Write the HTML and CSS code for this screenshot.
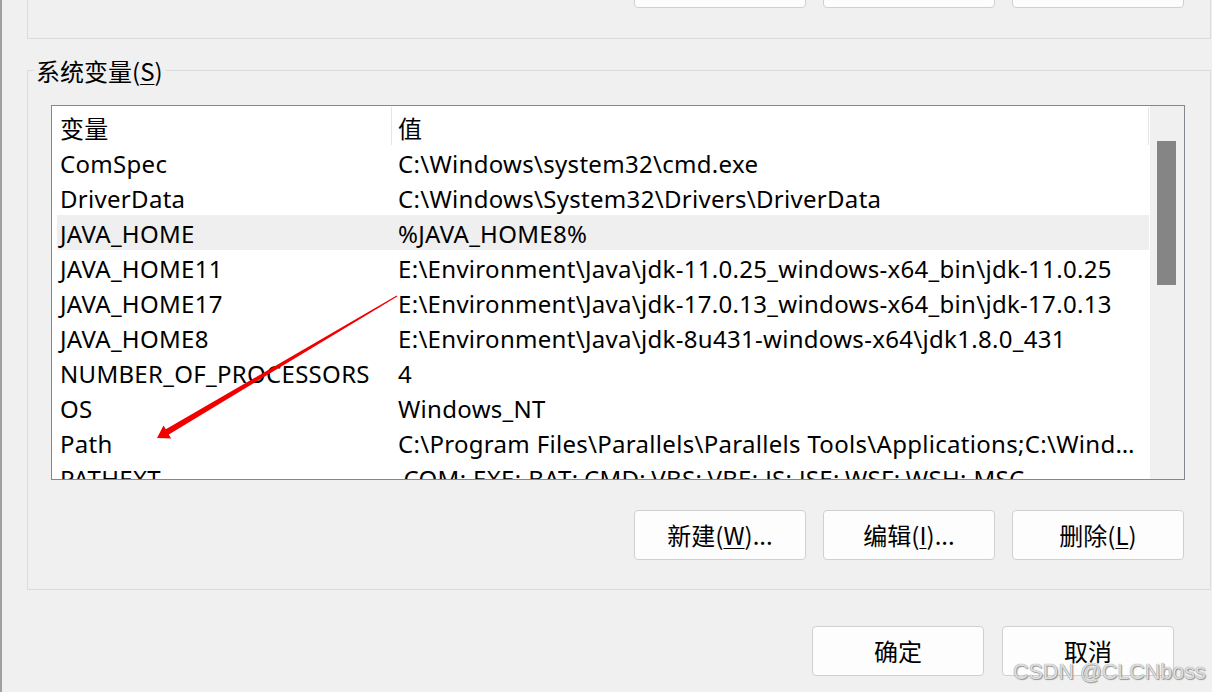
FILE: index.html
```html
<!DOCTYPE html>
<html lang="zh-CN">
<head>
<meta charset="utf-8">
<title>系统变量</title>
<link rel="stylesheet" href="styles.css">
</head>
<body>
<div class="window">
  <div class="top-group">
    <div class="btn-row top-btns">
      <button class="btn"></button>
      <button class="btn"></button>
      <button class="btn"></button>
    </div>
  </div>

  <div class="group">
    <div class="group-title">系统变量(<u>S</u>)</div>
    <div class="group-body">
      <div class="listbox">
        <div class="list-content">
          <div class="row header"><span class="c1">变量</span><span class="c2">值</span></div>
          <div class="row"><span class="c1">ComSpec</span><span class="c2">C:\Windows\system32\cmd.exe</span></div>
          <div class="row"><span class="c1">DriverData</span><span class="c2">C:\Windows\System32\Drivers\DriverData</span></div>
          <div class="row selected"><span class="c1">JAVA_HOME</span><span class="c2">%JAVA_HOME8%</span></div>
          <div class="row"><span class="c1">JAVA_HOME11</span><span class="c2">E:\Environment\Java\jdk-11.0.25_windows-x64_bin\jdk-11.0.25</span></div>
          <div class="row"><span class="c1">JAVA_HOME17</span><span class="c2">E:\Environment\Java\jdk-17.0.13_windows-x64_bin\jdk-17.0.13</span></div>
          <div class="row"><span class="c1">JAVA_HOME8</span><span class="c2">E:\Environment\Java\jdk-8u431-windows-x64\jdk1.8.0_431</span></div>
          <div class="row"><span class="c1">NUMBER_OF_PROCESSORS</span><span class="c2">4</span></div>
          <div class="row"><span class="c1">OS</span><span class="c2">Windows_NT</span></div>
          <div class="row"><span class="c1">Path</span><span class="c2">C:\Program Files\Parallels\Parallels Tools\Applications;C:\Windows\system32;C:\Windows;C:\Windows\System32\Wbem</span></div>
          <div class="row"><span class="c1">PATHEXT</span><span class="c2">.COM;.EXE;.BAT;.CMD;.VBS;.VBE;.JS;.JSE;.WSF;.WSH;.MSC</span></div>
        </div>
        <div class="scrollbar"><div class="thumb"></div></div>
      </div>
      <div class="btn-row group-btns">
        <button class="btn">新建(<u>W</u>)...</button>
        <button class="btn">编辑(<u>I</u>)...</button>
        <button class="btn">删除(<u>L</u>)</button>
      </div>
    </div>
  </div>

  <div class="btn-row dialog-btns">
    <button class="btn">确定</button>
    <button class="btn">取消</button>
  </div>
</div>

<svg class="arrow" width="1212" height="692" viewBox="0 0 1212 692" aria-hidden="true">
  <polygon fill="#f20000" points="396.7,295.6 165.8,429.3 163.5,425.4 157,438 171.1,438.4 168.8,434.5 397.3,296.4"/>
</svg>
<div class="watermark">CSDN @CLCNboss</div>
</body>
</html>
```

FILE: styles.css
```css
html, body {
  margin: 0;
  padding: 0;
  background: #f0f0f0;
}

body {
  position: relative;
  width: 1212px;
  height: 692px;
  overflow: hidden;
  font-family: "Noto Sans", "Noto Sans CJK SC", sans-serif;
  font-size: 24px;
  color: #000;
}

.window {
  box-sizing: border-box;
  width: 1212px;
  height: 692px;
  border-left: 2px solid #a0a0a0;
  padding-left: 25px;
}

u {
  text-decoration: underline;
  text-underline-offset: 3px;
  text-decoration-thickness: 1px;
}

/* ---------- top (partially visible) group ---------- */
.top-group {
  box-sizing: border-box;
  width: 1184px;
  height: 39px;
  border: 1px solid #dcdcdc;
  border-top: none;
  padding-right: 26px;
}

.top-btns .btn {
  margin-top: -42px;
}

/* ---------- buttons ---------- */
.btn-row {
  display: flex;
  justify-content: flex-end;
  gap: 17px;
}

.btn {
  box-sizing: border-box;
  width: 172px;
  height: 50px;
  padding: 0;
  background: #fdfdfd;
  border: 1px solid #d0d0d0;
  border-radius: 4px;
  font-family: "Noto Sans CJK SC", "Noto Sans", sans-serif;
  font-size: 24px;
  color: #000;
  line-height: 48px;
}

/* ---------- system variables group ---------- */
.group {
  box-sizing: border-box;
  width: 1184px;
  margin-top: 31px;
  border: 1px solid #dcdcdc;
}

.group-title {
  width: fit-content;
  margin: -16px 0 0 6px;
  padding: 0 3px 0 2px;
  background: #f0f0f0;
  line-height: 32px;
  font-family: "Noto Sans CJK SC", "Noto Sans", sans-serif;
}

.group-body {
  padding: 18px 25px 29px 23px;
}

.listbox {
  box-sizing: border-box;
  height: 375px;
  display: flex;
  border: 1px solid #828790;
  background: #fff;
}

.list-content {
  flex: 1;
  min-width: 0;
  overflow: hidden;
  padding: 1px 1px 0 5px;
}

.row {
  display: flex;
  height: 35px;
  box-sizing: border-box;
  padding-top: 3px;
  line-height: 32px;
  white-space: nowrap;
  letter-spacing: 0.3px;
}

.row.selected {
  background: #efefef;
}

.row .c1 {
  box-sizing: border-box;
  flex: 0 0 335px;
  padding-left: 3px;
  overflow: hidden;
}

.row .c2 {
  box-sizing: border-box;
  flex: 0 0 757px;
  padding: 0 10px 0 6px;
  overflow: hidden;
  text-overflow: ellipsis;
}

.row.header {
  height: 38px;
  padding-top: 0;
  line-height: 35px;
}

.row.header .c1,
.row.header .c2 {
  padding-top: 3px;
  border-right: 1px solid #e5e5e5;
  font-family: "Noto Sans CJK SC", "Noto Sans", sans-serif;
  line-height: 35px;
}

.scrollbar {
  flex: 0 0 34px;
  box-sizing: border-box;
  padding: 35px 0 0 7px;
  background: #f0f0f0;
}

.thumb {
  width: 19px;
  height: 144px;
  background: #858585;
}

.group-btns {
  margin-top: 30px;
  margin-right: 1px;
}

/* ---------- dialog buttons ---------- */
.dialog-btns {
  margin-top: 36px;
  margin-right: 38px;
  gap: 18px;
}

/* ---------- overlays ---------- */
.arrow {
  position: absolute;
  left: 0;
  top: 0;
  pointer-events: none;
}

.watermark {
  position: absolute;
  left: 1013px;
  top: 657px;
  font-family: "Liberation Sans", Arial, sans-serif;
  font-size: 21.5px;
  line-height: 30px;
  color: rgba(236, 236, 236, 0.9);
  text-shadow: 0 0 1px #6e6e6e, 1px 1px 1px #9a9a9a;
  white-space: nowrap;
  pointer-events: none;
}
```
